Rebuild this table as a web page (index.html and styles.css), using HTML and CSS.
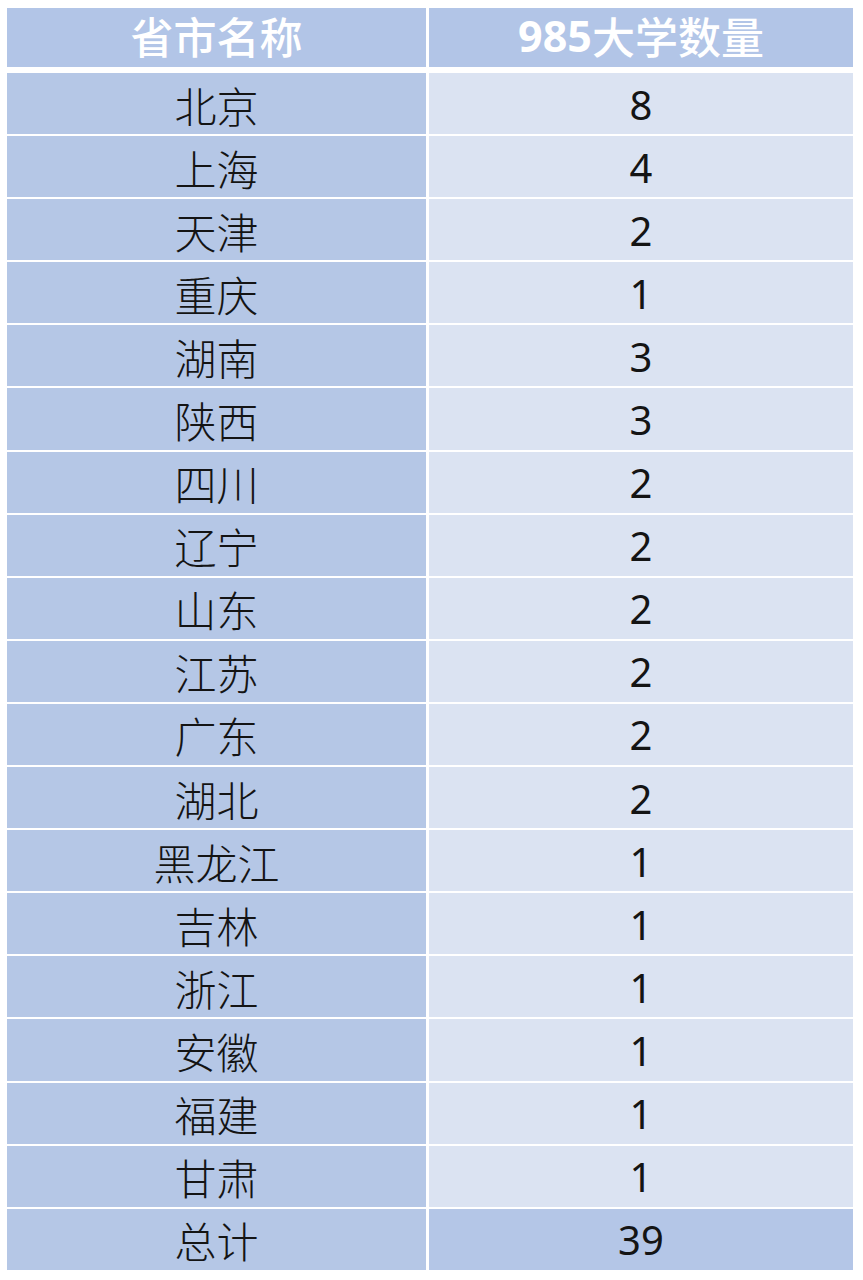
FILE: index.html
```html
<!DOCTYPE html>
<html lang="zh-CN">
<head>
<meta charset="utf-8">
<title>985大学数量</title>
<link rel="stylesheet" href="styles.css">
</head>
<body>
<div class="table">
  <div class="row head"><div class="cell name">省市名称</div><div class="cell num"><span class="digits">985</span>大学数量</div></div>
  <div class="body">
    <div class="row"><div class="cell name">北京</div><div class="cell num">8</div></div>
    <div class="row"><div class="cell name">上海</div><div class="cell num">4</div></div>
    <div class="row"><div class="cell name">天津</div><div class="cell num">2</div></div>
    <div class="row"><div class="cell name">重庆</div><div class="cell num">1</div></div>
    <div class="row"><div class="cell name">湖南</div><div class="cell num">3</div></div>
    <div class="row"><div class="cell name">陕西</div><div class="cell num">3</div></div>
    <div class="row"><div class="cell name">四川</div><div class="cell num">2</div></div>
    <div class="row"><div class="cell name">辽宁</div><div class="cell num">2</div></div>
    <div class="row"><div class="cell name">山东</div><div class="cell num">2</div></div>
    <div class="row"><div class="cell name">江苏</div><div class="cell num">2</div></div>
    <div class="row"><div class="cell name">广东</div><div class="cell num">2</div></div>
    <div class="row"><div class="cell name">湖北</div><div class="cell num">2</div></div>
    <div class="row"><div class="cell name">黑龙江</div><div class="cell num">1</div></div>
    <div class="row"><div class="cell name">吉林</div><div class="cell num">1</div></div>
    <div class="row"><div class="cell name">浙江</div><div class="cell num">1</div></div>
    <div class="row"><div class="cell name">安徽</div><div class="cell num">1</div></div>
    <div class="row"><div class="cell name">福建</div><div class="cell num">1</div></div>
    <div class="row"><div class="cell name">甘肃</div><div class="cell num">1</div></div>
    <div class="row total"><div class="cell name">总计</div><div class="cell num">39</div></div>
  </div>
</div>
</body>
</html>
```

FILE: styles.css
```css
html, body {
  margin: 0;
  padding: 0;
  background: #ffffff;
}
body {
  font-family: "Noto Sans", "Noto Sans CJK SC", sans-serif;
  color: #141414;
}
.table {
  margin: 8px 10px 0 7px;
  display: flex;
  flex-direction: column;
  gap: 6px;
}
.body {
  display: flex;
  flex-direction: column;
  gap: 2px;
}
.row {
  display: grid;
  grid-template-columns: 419px 1fr;
  column-gap: 3px;
  height: 61.1px;
}
.cell {
  display: flex;
  align-items: center;
  justify-content: center;
}
.name {
  background: #b5c7e6;
  font-family: "Noto Sans CJK SC", sans-serif;
  font-weight: 300;
  font-size: 42px;
  line-height: 1;
  padding-top: 2px;
}
.num {
  background: #dbe3f2;
  font-size: 40px;
  line-height: 1;
  padding-top: 2px;
}
.head {
  height: 59px;
}
.head .cell {
  background: #b2c5e7;
  color: #ffffff;
  font-family: "Noto Sans CJK SC", sans-serif;
  font-weight: 500;
  font-size: 43px;
  padding-top: 0;
  padding-bottom: 4px;
}
.head .digits {
  font-family: "Noto Sans", sans-serif;
  font-weight: 700;
}
.total .num {
  background: #b4c6e7;
}
```
